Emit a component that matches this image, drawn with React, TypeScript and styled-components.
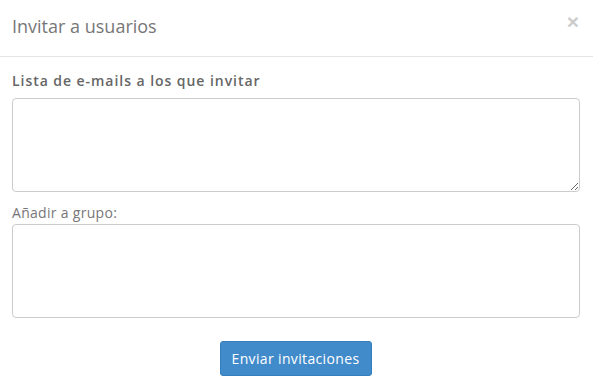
import React, { FC } from "react";
import styled, { createGlobalStyle } from "styled-components";

const GlobalStyle = createGlobalStyle`
  html, body {
    margin: 0;
    padding: 0;
    background: #fff;
  }
  body {
    font-family: "Open Sans", "Liberation Sans", sans-serif;
    color: #666;
  }
  * {
    box-sizing: border-box;
  }
`;

const Modal = styled.div`
  width: 593px;
  height: 389px;
  background: #fff;
  display: flex;
  flex-direction: column;
`;

const Header = styled.div`
  height: 57px;
  padding: 0 12px;
  display: flex;
  align-items: center;
  justify-content: space-between;
  border-bottom: 1px solid #e5e5e5;
`;

const Title = styled.h4`
  margin: 0;
  font-size: 18px;
  font-weight: 400;
  color: #777;
  line-height: 24px;
  margin-top: -4px;
`;

const Close = styled.button`
  border: 0;
  background: none;
  padding: 0;
  margin: -13px 2px 0 0;
  font-family: "Liberation Sans", sans-serif;
  font-size: 21px;
  font-weight: 700;
  line-height: 1;
  color: #ccc;
  cursor: pointer;
`;

const Body = styled.div`
  padding: 14px 12px 0;
  display: flex;
  flex-direction: column;
`;

const Label = styled.label<{ $bold?: boolean }>`
  display: block;
  font-size: 14px;
  line-height: 20px;
  font-weight: ${(p) => (p.$bold ? 600 : 400)};
  color: ${(p) => (p.$bold ? "#666" : "#777")};
  letter-spacing: ${(p) => (p.$bold ? "0.95px" : "0.3px")};
  margin-bottom: ${(p) => (p.$bold ? "7px" : "1px")};
`;

const TextArea = styled.textarea<{ $fixed?: boolean }>`
  display: block;
  width: 568px;
  height: 94px;
  border: 1px solid #ccc;
  border-radius: 4px;
  resize: ${(p) => (p.$fixed ? "none" : "vertical")};
  font-family: inherit;
  font-size: 13px;
  padding: 6px 10px;
  outline: none;
  background: #fff;
`;

const Group = styled.div`
  margin-bottom: 11px;
`;

const Footer = styled.div`
  display: flex;
  justify-content: center;
  padding-top: 23px;
`;

const Button = styled.button`
  width: 152px;
  height: 35px;
  margin-left: -2px;
  background: #428bca;
  border: 1px solid #357ebd;
  border-radius: 3px;
  color: #fff;
  font-family: "Open Sans", "Liberation Sans", sans-serif;
  font-size: 14px;
  letter-spacing: 0.35px;
  cursor: pointer;
`;

const App: FC = () => {
  return (
    <>
      <GlobalStyle />
      <Modal>
        <Header>
          <Title>Invitar a usuarios</Title>
          <Close aria-label="Cerrar">×</Close>
        </Header>
        <Body>
          <Group>
            <Label $bold>Lista de e-mails a los que invitar</Label>
            <TextArea />
          </Group>
          <Label>Añadir a grupo:</Label>
          <TextArea $fixed />
          <Footer>
            <Button>Enviar invitaciones</Button>
          </Footer>
        </Body>
      </Modal>
    </>
  );
};

export default App;
